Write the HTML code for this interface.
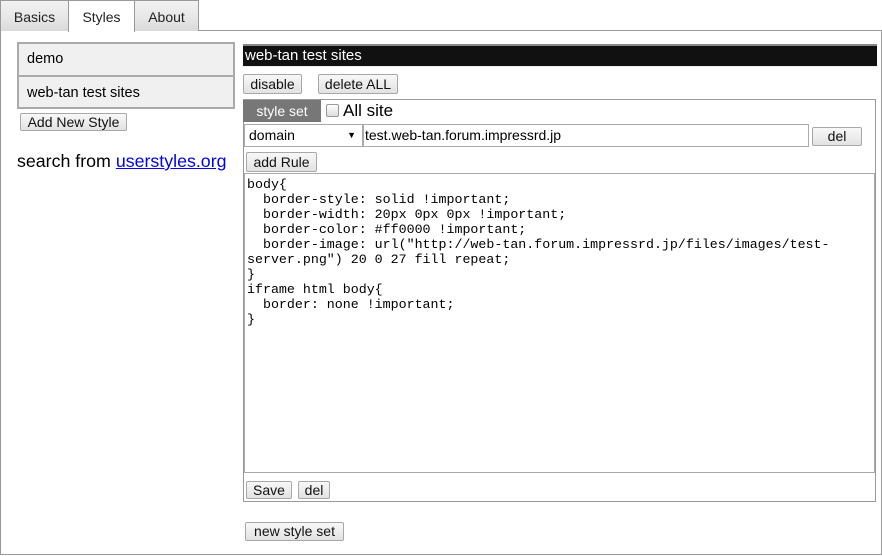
<!DOCTYPE html>
<html><head><meta charset="utf-8"><style>
*{box-sizing:border-box;margin:0;padding:0}
body{width:882px;height:556px;background:#fff;font-family:"Liberation Sans",Arial,sans-serif;position:relative;overflow:hidden;color:#000}
.a{position:absolute}
.tab{position:absolute;top:0;height:31px;border:1px solid #999;border-bottom:none;background:linear-gradient(#f2f2f2,#e6e6e6 60%,#d9d9d9);font-size:14px;text-align:center;line-height:32px;color:#222}
.btn{position:absolute;border:1px solid #a8a8a8;border-radius:2px;background:linear-gradient(#f8f8f8,#e2e2e2);font-size:14px;text-align:center;color:#111;line-height:16px}
.item{position:absolute;left:17px;width:218px;border:2px solid #aaa;background:#f0f0f0;font-size:14.5px;padding-left:8px}
pre{font-family:"Liberation Mono","Noto Sans CJK JP",monospace;font-size:13.3px;line-height:15px;letter-spacing:0}
</style></head><body>
<div class="a" style="left:0;top:30px;width:882px;height:525px;border:1px solid #999"></div>
<div class="tab" style="left:0;width:69px">Basics</div>
<div class="tab" style="left:68px;width:67px;background:#fff;height:32px;z-index:2">Styles</div>
<div class="tab" style="left:134px;width:65px">About</div>

<div class="item" style="top:42px;height:35px;line-height:31px">demo</div>
<div class="item" style="top:75px;height:34px;line-height:32px">web-tan test sites</div>
<div class="btn" style="left:20px;top:113px;width:107px;height:18px">Add New Style</div>
<div class="a" style="left:17px;top:151px;font-size:17.8px">search from <span style="color:#00e;text-decoration:underline">userstyles.org</span></div>

<div class="a" style="left:243px;top:44px;width:634px;height:23px;background:#111;border-top:2px solid #888;border-bottom:1px solid #eee;color:#fff;font-size:15px;line-height:20px;padding-left:2px">web-tan test sites</div>
<div class="btn" style="left:243px;top:74px;width:59px;height:20px;line-height:18px">disable</div>
<div class="btn" style="left:318px;top:74px;width:80px;height:20px;line-height:18px">delete ALL</div>

<div class="a" style="left:243px;top:99px;width:633px;height:403px;border:1px solid #999"></div>
<div class="a" style="left:243px;top:100px;width:78px;height:22px;background:#777;color:#fff;font-size:14px;text-align:center;line-height:22px">style set</div>
<div class="a" style="left:326px;top:104px;width:13px;height:13px;border:1px solid #999;border-radius:2px;background:linear-gradient(#fff,#ddd)"></div>
<div class="a" style="left:343px;top:101px;font-size:17px">All site</div>
<div class="a" style="left:244px;top:124px;width:119px;height:23px;border:1px solid #aaa;font-size:14px;line-height:21px;padding-left:4px">domain<span style="position:absolute;right:6px;font-size:9px">▼</span></div>
<div class="a" style="left:363px;top:124px;width:446px;height:23px;border:1px solid #aaa;font-size:14px;line-height:21px;padding-left:1px">test.web-tan.forum.impressrd.jp</div>
<div class="btn" style="left:812px;top:127px;width:50px;height:19px">del</div>
<div class="btn" style="left:246px;top:152px;width:71px;height:20px;line-height:18px">add Rule</div>
<div class="a" style="left:244px;top:173px;width:631px;height:300px;border:1px solid #aaa"></div>
<pre class="a" style="left:247px;top:177px">body{
  border-style: solid !important;
  border-width: 20px 0px 0px !important;
  border-color: #ff0000 !important;
  border-image: url("http://web-tan.forum.impressrd.jp/files/images/test-
server.png") 20 0 27 fill repeat;
}
iframe html body{
  border: none !important;
}</pre>
<div class="btn" style="left:246px;top:481px;width:46px;height:18px">Save</div>
<div class="btn" style="left:298px;top:481px;width:32px;height:18px">del</div>
<div class="btn" style="left:245px;top:522px;width:99px;height:19px">new style set</div>
</body></html>
